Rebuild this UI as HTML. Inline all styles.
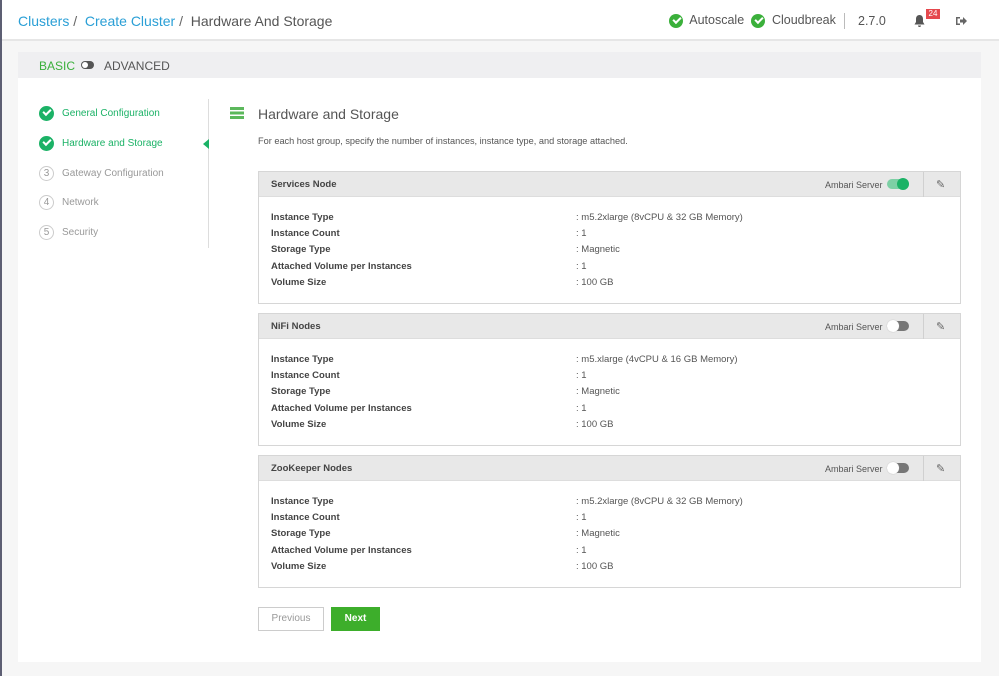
<!DOCTYPE html>
<html><head><style>
*{margin:0;padding:0;box-sizing:border-box}
body{width:999px;height:676px;background:#f6f6f6;font-family:"Liberation Sans",sans-serif;position:relative;overflow:hidden;color:#555}
.a{position:absolute;white-space:nowrap}
.lb{position:absolute;left:0;top:0;width:2px;height:676px;background:#5d5f73}
.hdr{position:absolute;left:2px;top:0;width:997px;height:41px;background:#fff;border-bottom:2px solid #e6e6e6}
.card{position:absolute;left:18px;top:52px;width:963px;height:610px;background:#fff}
.bar{position:absolute;left:18px;top:52px;width:963px;height:26px;background:#efeff1}
.chk{display:inline-block;width:15px;height:15px;border-radius:50%;background:#1bb266;position:relative;vertical-align:middle}
.chk.a{position:absolute}
.chk:after{content:"";position:absolute;left:4px;top:3px;width:6px;height:3px;border-left:2px solid #fff;border-bottom:2px solid #fff;transform:rotate(-45deg)}
.num{width:15px;height:15px;border:1px solid #ccc;border-radius:50%;font-size:10px;color:#999;text-align:center;line-height:13px}
.panel{position:absolute;left:258px;width:703px;height:133px;border:1px solid #d6d6d6;background:#fff}
.ph{height:25px;background:#e8e8e8;border-bottom:1px solid #ddd;position:relative;font-size:9.5px;font-weight:bold;color:#444}
.row{position:absolute;left:12px;font-size:9.5px;font-weight:bold;color:#444}
.val{position:absolute;left:317px;font-size:9.5px;color:#555}
.tg{position:absolute;top:7px;width:22px;height:10px;border-radius:5px}
.tg i{position:absolute;top:-1px;width:12px;height:12px;border-radius:50%}
.st{position:absolute;left:62px;font-size:10px}
</style></head><body>
<div class="lb"></div>
<div class="hdr"></div>
<div class="a" style="left:18px;top:13px;font-size:14px;color:#2a9fd6">Clusters <span style="color:#666">/</span>&nbsp; Create Cluster <span style="color:#666">/</span>&nbsp; <span style="color:#555">Hardware And Storage</span></div>
<div class="a" style="left:669px;top:13px;font-size:12.5px;color:#555"><span class="chk" style="background:#3bb03b;width:14px;height:14px"></span>&nbsp; Autoscale</div>
<div class="a" style="left:751px;top:13px;font-size:12.5px;color:#555"><span class="chk" style="background:#3bb03b;width:14px;height:14px"></span>&nbsp; Cloudbreak</div>
<div class="a" style="left:844px;top:13px;width:1px;height:16px;background:#bbb"></div>
<div class="a" style="left:858px;top:14px;font-size:12.5px;color:#555">2.7.0</div>
<svg class="a" style="left:913px;top:14px" width="13" height="14" viewBox="0 0 13 14"><path d="M6.5 1C4 1 3 3 3 5v3L1.5 10.5h10L10 8V5C10 3 9 1 6.5 1z M5 11.5h3a1.5 1.5 0 0 1-3 0z" fill="#555"/></svg>
<div class="a" style="left:926px;top:9px;width:14px;height:10px;background:#e5484d;color:#fff;font-size:8px;text-align:center;line-height:10px">24</div>
<svg class="a" style="left:956px;top:16px" width="11" height="10" viewBox="0 0 11 10"><path d="M0 1h4v1.5H1.5v5H4V9H0z M4 3.5h3V1l4 4-4 4V6.5H4z" fill="#666"/></svg>
<div class="card"></div>
<div class="bar"></div>
<div class="a" style="left:39px;top:59px;font-size:12px;color:#3bb03b">BASIC</div>
<div class="a" style="left:81px;top:61px;width:13px;height:8px;border-radius:4px;background:#555"><i style="position:absolute;left:1px;top:1px;width:6px;height:6px;border-radius:50%;background:#fff"></i></div>
<div class="a" style="left:104px;top:59px;font-size:12px;color:#555">ADVANCED</div>
<div class="a" style="left:208px;top:99px;width:1px;height:149px;background:#ddd"></div>
<div class="a" style="left:203px;top:139px;width:0;height:0;border-top:5px solid transparent;border-bottom:5px solid transparent;border-right:6px solid #1bb266"></div>
<span class="a chk" style="left:39px;top:106px"></span><div class="a st" style="top:108px;color:#1bb266">General Configuration</div>
<span class="a chk" style="left:39px;top:136px"></span><div class="a st" style="top:138px;color:#1bb266">Hardware and Storage</div>
<div class="a num" style="left:39px;top:166px">3</div><div class="a st" style="top:168px;color:#999">Gateway Configuration</div>
<div class="a num" style="left:39px;top:195px">4</div><div class="a st" style="top:197px;color:#999">Network</div>
<div class="a num" style="left:39px;top:225px">5</div><div class="a st" style="top:227px;color:#999">Security</div>
<svg class="a" style="left:230px;top:107px" width="14" height="12" viewBox="0 0 14 12"><rect y="0" width="14" height="3" fill="#5cb85c"/><rect y="4.5" width="14" height="3" fill="#5cb85c"/><rect y="9" width="14" height="3" fill="#5cb85c"/></svg>
<div class="a" style="left:258px;top:106px;font-size:14px;color:#555">Hardware and Storage</div>
<div class="a" style="left:258px;top:136px;font-size:9.2px;color:#555">For each host group, specify the number of instances, instance type, and storage attached.</div>

<div class="panel" style="top:171px"><div class="ph"><span class="a" style="left:12px;top:7px">Services Node</span><span class="a" style="left:566px;top:8px;font-weight:normal;color:#555;font-size:9px">Ambari Server</span><span class="tg" style="left:628px;background:#7dd0a5"><i style="left:10px;background:#1bb266"></i></span><span class="a" style="left:664px;top:0;width:1px;height:25px;background:#d0d0d0"></span><span class="a" style="left:677px;top:6px;font-weight:normal;font-size:11px;color:#666">✎</span></div>
<div class="row" style="top:40px">Instance Type</div><div class="val" style="top:40px">: m5.2xlarge (8vCPU &amp; 32 GB Memory)</div>
<div class="row" style="top:56px">Instance Count</div><div class="val" style="top:56px">: 1</div>
<div class="row" style="top:72px">Storage Type</div><div class="val" style="top:72px">: Magnetic</div>
<div class="row" style="top:89px">Attached Volume per Instances</div><div class="val" style="top:89px">: 1</div>
<div class="row" style="top:105px">Volume Size</div><div class="val" style="top:105px">: 100 GB</div></div>

<div class="panel" style="top:313px"><div class="ph"><span class="a" style="left:12px;top:7px">NiFi Nodes</span><span class="a" style="left:566px;top:8px;font-weight:normal;color:#555;font-size:9px">Ambari Server</span><span class="tg" style="left:628px;background:#777"><i style="left:0;background:#fff;box-shadow:0 0 1px #aaa"></i></span><span class="a" style="left:664px;top:0;width:1px;height:25px;background:#d0d0d0"></span><span class="a" style="left:677px;top:6px;font-weight:normal;font-size:11px;color:#666">✎</span></div>
<div class="row" style="top:40px">Instance Type</div><div class="val" style="top:40px">: m5.xlarge (4vCPU &amp; 16 GB Memory)</div>
<div class="row" style="top:56px">Instance Count</div><div class="val" style="top:56px">: 1</div>
<div class="row" style="top:72px">Storage Type</div><div class="val" style="top:72px">: Magnetic</div>
<div class="row" style="top:89px">Attached Volume per Instances</div><div class="val" style="top:89px">: 1</div>
<div class="row" style="top:105px">Volume Size</div><div class="val" style="top:105px">: 100 GB</div></div>

<div class="panel" style="top:455px"><div class="ph"><span class="a" style="left:12px;top:7px">ZooKeeper Nodes</span><span class="a" style="left:566px;top:8px;font-weight:normal;color:#555;font-size:9px">Ambari Server</span><span class="tg" style="left:628px;background:#777"><i style="left:0;background:#fff;box-shadow:0 0 1px #aaa"></i></span><span class="a" style="left:664px;top:0;width:1px;height:25px;background:#d0d0d0"></span><span class="a" style="left:677px;top:6px;font-weight:normal;font-size:11px;color:#666">✎</span></div>
<div class="row" style="top:40px">Instance Type</div><div class="val" style="top:40px">: m5.2xlarge (8vCPU &amp; 32 GB Memory)</div>
<div class="row" style="top:56px">Instance Count</div><div class="val" style="top:56px">: 1</div>
<div class="row" style="top:72px">Storage Type</div><div class="val" style="top:72px">: Magnetic</div>
<div class="row" style="top:89px">Attached Volume per Instances</div><div class="val" style="top:89px">: 1</div>
<div class="row" style="top:105px">Volume Size</div><div class="val" style="top:105px">: 100 GB</div></div>

<div class="a" style="left:258px;top:607px;width:66px;height:24px;border:1px solid #ccc;font-size:10px;color:#999;text-align:center;line-height:22px">Previous</div>
<div class="a" style="left:331px;top:607px;width:49px;height:24px;background:#3dae2b;font-size:10px;color:#fff;font-weight:bold;text-align:center;line-height:24px">Next</div>
</body></html>
